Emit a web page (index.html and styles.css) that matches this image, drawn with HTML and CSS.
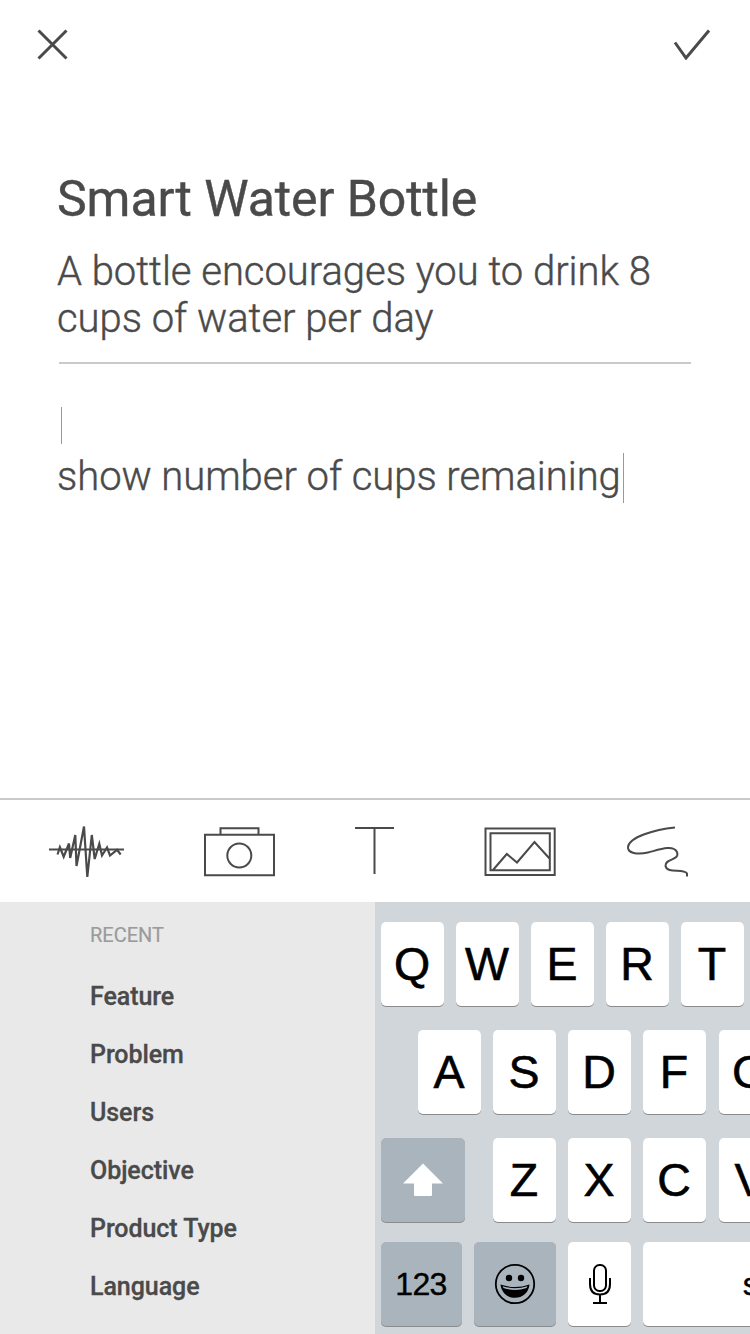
FILE: index.html
```html
<!DOCTYPE html>
<html lang="en">
<head>
<meta charset="utf-8">
<title>Smart Water Bottle</title>
<link rel="stylesheet" href="styles.css">
</head>
<body>
<div class="screen">
  <header class="topbar">
    <svg class="icon" width="32" height="32" viewBox="36 28 32 32"><path d="M38.500 30.500L66.500 58.500M66.500 30.500L38.500 58.500" stroke-width="3"/></svg>
    <svg class="icon" width="38" height="32" viewBox="673 28 38 32"><path d="M675 42.500L686 58L709 30.500" stroke-width="3"/></svg>
  </header>
  <main class="note">
    <h1 class="title">Smart Water Bottle</h1>
    <p class="summary">A bottle encourages you to drink 8<br>cups of water per day</p>
    <div class="rule"></div>
    <div class="caret caret-idle"></div>
    <div class="entry"><span class="entry-text">show number of cups remaining</span><span class="caret caret-active"></span></div>
  </main>
  <nav class="tools">
    <svg class="icon" width="78" height="54" viewBox="48 825 78 54"><path d="M49 849.500H124" stroke-width="2"/><path d="M57.500 854.500L59.900 847.300L63.700 856.700L69 843.500L70.200 858L75.300 835L76.500 866L84 826.500L87.300 877L91.800 835L94.700 859L99.300 843.700L102 855.500L107 847.500L110 855.500L117 849.800L120.700 854.500" stroke-width="2.200"/></svg>
    <svg class="icon" width="72" height="54" viewBox="203 825 72 54"><path d="M205 834.800H274V875.300H205ZM220.500 834V828.200H258.500V834" stroke-width="2"/><circle cx="239.300" cy="855.500" r="12" stroke-width="2"/></svg>
    <svg class="icon" width="40" height="54" viewBox="354 825 40 54"><path d="M355 828H394M374.500 828V874" stroke-width="2"/></svg>
    <svg class="icon" width="72" height="54" viewBox="484 825 72 54"><path d="M485.500 828.500H554.700V875H485.500ZM490.500 833.200H549.800V870.300H490.500ZM493 870L506.800 854L517 862.500L534.500 842L549.500 858.500" stroke-width="2"/></svg>
    <svg class="icon" width="64" height="54" viewBox="626 825 64 54"><path d="M675 827.500C655 829.500 629 837 628 847C627.500 853 637 855 648 852.500C658 850 673 844 677 852C680 861 665 858 665.500 866C667 874 684 868 687 873.500L687 876.500" stroke-width="2"/></svg>
  </nav>
  <section class="bottom">
    <aside class="recent">
      <h2 class="recent-heading">RECENT</h2>
      <ul class="recent-list">
        <li>Feature</li><li>Problem</li><li>Users</li><li>Objective</li><li>Product Type</li><li>Language</li>
      </ul>
    </aside>
    <div class="keyboard">
      <div class="row"><span class="key">Q</span><span class="key">W</span><span class="key">E</span><span class="key">R</span><span class="key">T</span></div>
      <div class="row row-home"><span class="key">A</span><span class="key">S</span><span class="key">D</span><span class="key">F</span><span class="key key-edge">G</span></div>
      <div class="row row-shift"><span class="key key-mod key-shift"><svg width="42" height="36" viewBox="0 0 42 36"><path fill="#fff" d="M21 1.500L41 21.500H30V33Q30 34 29 34H13Q12 34 12 33V21.500H1Z"/></svg></span><span class="key">Z</span><span class="key">X</span><span class="key">C</span><span class="key key-edge">V</span></div>
      <div class="row row-space"><span class="key key-mod key-num">123</span><span class="key key-mod key-emoji"><svg width="42" height="42" viewBox="0 0 42 42"><circle cx="21" cy="21" r="19.200" fill="none" stroke="#000" stroke-width="1.800"/><circle cx="15" cy="15" r="3.200"/><circle cx="27" cy="15" r="3.200"/><path d="M6.500 21.500Q21 26.500 35.500 21.500C34.500 30 28.500 34.800 21 34.800S7.500 30 6.500 21.500Z"/><path fill="#aab4bd" d="M8.500 23.300Q21 27 33.500 23.300L32.500 25Q21 29 9.500 25Z"/></svg></span><span class="key"><svg class="mic" width="24" height="42" viewBox="0 0 24 42"><rect x="6" y="2" width="12" height="26" rx="5.500"/><path d="M2 15V21Q2 31.500 12 31.500T22 21V15M12 32V40M5 40H19"/></svg></span><span class="key key-space">space</span></div>
    </div>
  </section>
</div>
</body>
</html>
```
FILE: styles.css
```css
* { box-sizing: border-box; }
body { margin: 0; background: #fff; }
.screen {
  display: flex; flex-direction: column;
  width: 750px; height: 1334px; overflow: hidden;
  font-family: Roboto, "Liberation Sans", sans-serif; color: #4a4a4a;
}
.icon { display: block; fill: none; stroke: #4a4a4a; }
.topbar {
  display: flex; justify-content: space-between; align-items: center;
  height: 88px; padding: 0 39px 0 36px;
}
.note { height: 710px; padding: 81px 57px 0; }
.title {
  margin: 0; font-size: 50px; line-height: 60px; font-weight: 400;
  letter-spacing: -0.08px; white-space: nowrap; -webkit-text-stroke: 0.4px;
}
.summary {
  margin: 19px 0 0; font-size: 40px; line-height: 47px; font-weight: 300;
  letter-spacing: -0.03px; white-space: nowrap; -webkit-text-stroke: 0.4px;
}
.rule { height: 2px; margin: 20px 2px 0; background: #cacaca; }
.caret { width: 1px; background: #999; }
.caret-idle { height: 37px; margin: 43px 0 0 4px; }
.entry { display: flex; align-items: flex-start; height: 50px; margin-top: 9px; }
.entry-text {
  width: 566px; font-size: 40px; line-height: 47px; font-weight: 300;
  letter-spacing: -0.05px; white-space: nowrap; -webkit-text-stroke: 0.4px;
}
.caret-active { height: 50px; }
.tools {
  display: grid; grid-template-columns: 155px 151px 130px 142px 64px;
  height: 104px; padding: 25px 0 0 48px; border-top: 2px solid #cacaca;
}
.bottom { display: flex; height: 432px; }
.recent { width: 375px; padding: 21px 0 0 90px; background: #e9e9e9; }
.recent-heading { margin: 0; font-size: 20px; line-height: 24px; font-weight: 400; color: #9b9b9b; -webkit-text-stroke: 0.2px; }
.recent-list {
  margin: 21px 0 0; padding: 0; list-style: none;
  font-size: 25px; line-height: 58px; font-weight: 500;
  letter-spacing: -0.06px; -webkit-text-stroke: 0.3px;
}
.keyboard {
  display: flex; flex-direction: column; gap: 24px;
  width: 375px; padding: 20px 0 0 6px; overflow: hidden; background: #d1d6da;
}
.row { display: flex; gap: 12px; }
.row-home { padding-left: 37px; }
.row-space { margin-top: -4px; }
.key {
  display: flex; flex: none; justify-content: center; align-items: center;
  width: 63px; height: 84px; padding-right: 1px; border-radius: 5px; background: #fff;
  box-shadow: 0 1px 0 #898c8f; color: #000;
  font-family: "Liberation Sans", Arial, sans-serif; font-size: 46.5px;
  -webkit-text-stroke: 0.6px;
}
.key-edge { margin-left: 1px; }
.key-mod { padding-right: 0; background: #aab4bd; }
.key-shift { width: 84px; margin-right: 16px; }
.key-num { width: 81px; padding-right: 1px; font-size: 32px; letter-spacing: -0.6px; -webkit-text-stroke: 0.4px; }
.key-emoji { width: 82px; }
.key-space { width: 286px; font-size: 32px; -webkit-text-stroke: 0.4px; }
.mic { margin-left: 1px; fill: none; stroke: #000; stroke-width: 2; -webkit-text-stroke: 0; }
```
